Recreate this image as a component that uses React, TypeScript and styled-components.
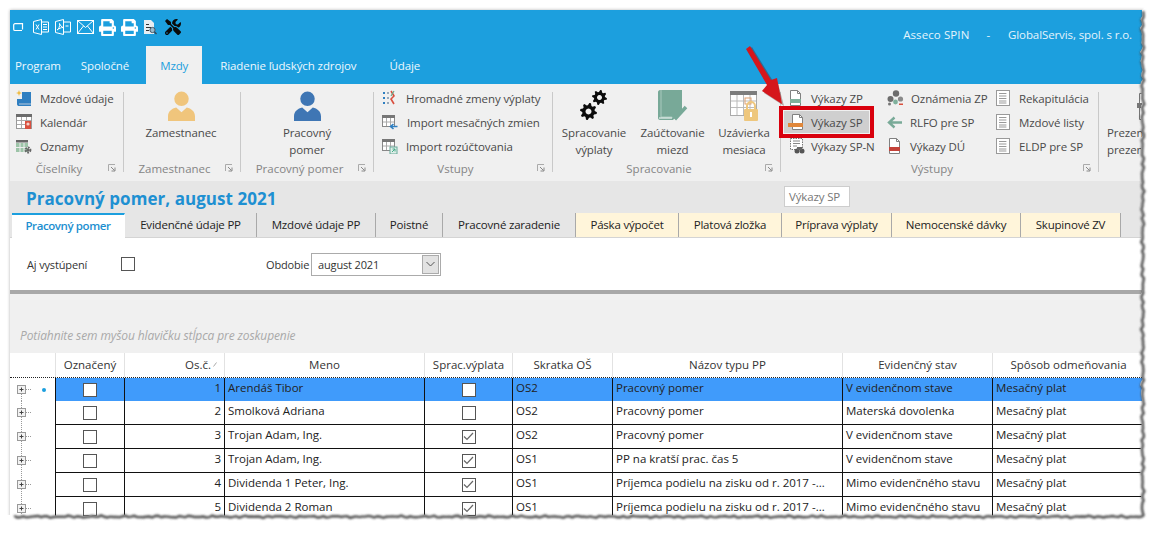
import React from "react";
import styled, { createGlobalStyle } from "styled-components";
import { FaPrint, FaTools } from "react-icons/fa";

const Global = createGlobalStyle`
  html, body { margin: 0; padding: 0; background: #fff; }
  body { font-family: "Open Sans", "Noto Sans", sans-serif; font-size: 11.5px; color: #333; }
  #root { width: 1154px; height: 533px; overflow: hidden; position: relative; }
`;

const Page = styled.div`
  width: 1154px; height: 533px; padding: 10px 0 0 10px; box-sizing: border-box; position: relative; background: #fff; overflow: hidden;
`;
const Win = styled.div`
  width: 1134px; height: 512px; overflow: hidden; display: flex; flex-direction: column; box-shadow: 0 0 3px rgba(0,0,0,.3); background: #fff;
`;
const BlueBar = styled.header`
  background: #1c9fde; height: 74px; flex: none; display: flex; flex-direction: column;
`;
const QuickRow = styled.div`
  height: 36px; display: flex; align-items: center; padding: 0 0 2px 3px; box-sizing: border-box; color: #fff;
`;
const QuickSlot = styled.span<{ $w?: number; $dark?: boolean }>`
  width: ${p => p.$w ?? 22}px; height: 18px; display: flex; align-items: center; color: ${p => (p.$dark ? "#0a0a0a" : "#fff")}; flex: none;
`;
const Brand = styled.div`
  margin-left: auto; padding-right: 12px; padding-top: 14px; display: flex; color: #e4f4fc; font-size: 11.5px; letter-spacing: -0.1px;
`;
const BrandName = styled.span`
  letter-spacing: 0.1px;
`;
const BrandDash = styled.span`
  margin: 0 18px 0 17px;
`;
const TabRow = styled.nav`
  height: 38px; display: flex; align-items: stretch;
`;
const TopTab = styled.div<{ $ml: number; $active?: boolean }>`
  margin-left: ${p => p.$ml}px; display: flex; align-items: center; font-size: 11.5px; letter-spacing: -0.1px; padding: 0 ${p => (p.$active ? 14 : 0)}px 0;
  color: ${p => (p.$active ? "#1c9fde" : "#eef8fd")};
  background: ${p => (p.$active ? "#f0f0f0" : "transparent")};
`;

const Ribbon = styled.section`
  height: 97px; flex: none; background: #f0f0f0; display: flex; align-items: stretch; overflow: hidden;
`;
const Group = styled.div<{ $w: number }>`
  width: ${p => p.$w}px; flex: none; display: flex; flex-direction: column; padding: 2px 0 5px; box-sizing: border-box;
`;
const Sep = styled.div`
  width: 1px; flex: none; background: #c9c9c9; margin: 8px 0 9px;
`;
const GroupBody = styled.div<{ $pl?: number }>`
  flex: 1; display: flex; padding-left: ${p => p.$pl ?? 0}px;
`;
const Foot = styled.div`
  height: 16px; display: flex; align-items: center; color: #858585; font-size: 11.5px;
`;
const FootLabel = styled.span`
  flex: 1; text-align: center;
`;
const Launcher = styled.svg`
  width: 8px; height: 8px; margin-right: 7px; flex: none;
`;
const Col = styled.div<{ $w?: number }>`
  display: flex; flex-direction: column; width: ${p => (p.$w ? p.$w + "px" : "auto")}; flex: none;
`;
const SmallItem = styled.div<{ $gap?: number; $hot?: boolean; $pl?: number }>`
  height: ${p => (p.$hot ? 22 : 24)}px; display: flex; align-items: center; gap: ${p => p.$gap ?? 8}px; white-space: nowrap; color: #4a4a4a; font-size: 11.5px; letter-spacing: -0.1px;
  padding-left: ${p => p.$pl ?? 4}px;
  ${p => (p.$hot ? `margin: 1px 0; width: 81px; background: #cfcfcf; outline: 4px solid #d9000d; outline-offset: 1px;` : ``)}
`;
const BigBtn = styled.div<{ $w: number }>`
  width: ${p => p.$w}px; flex: none; display: flex; flex-direction: column; align-items: center; color: #4a4a4a; font-size: 11.5px; line-height: 17px; text-align: center; letter-spacing: -0.1px;
`;
const ClippedBtn = styled.div`
  width: 60px; flex: none; color: #4a4a4a; font-size: 11.5px; line-height: 17px; letter-spacing: -0.1px; text-indent: 2px;
`;
const BigIcon = styled.div`
  height: 35px; display: flex; align-items: flex-end; margin-bottom: 3px; flex: none;
`;
const ClippedIcon = styled.div`
  height: 35px; margin-bottom: 3px; padding-left: 12px;
`;

const TitleBar = styled.div`
  height: 32px; flex: none; background: #e6e6e6; position: relative; display: flex; align-items: flex-end; padding: 0 0 3px 16px; box-sizing: border-box;
`;
const Title = styled.h1`
  margin: 0; font-size: 17px; line-height: 22px; font-weight: 700; color: #1e90d2; letter-spacing: 0.05px;
`;
const Hint = styled.div`
  position: absolute; left: 774px; top: 5px; width: 66px; height: 21px; box-sizing: border-box; background: #fff; border: 1px solid #cdcdcd; color: #777; font-size: 11.5px; line-height: 19px; padding-left: 4px; letter-spacing: -0.15px;
`;
const Tabs = styled.div`
  height: 24px; flex: none; background: #e6e6e6; display: flex; padding-left: 2px; border-bottom: 1px solid #d4d4d4; box-sizing: content-box;
`;
const PageTab = styled.div<{ $w: number; $kind?: "active" | "warm" }>`
  width: ${p => p.$w}px; flex: none; box-sizing: border-box; display: flex; align-items: center; justify-content: center; padding-bottom: 2px; font-size: 11.5px; color: #222; letter-spacing: -0.2px; white-space: nowrap;
  border-right: 1px solid ${p => (p.$kind === "active" ? "transparent" : "#a9a9a9")};
  background: ${p => (p.$kind === "active" ? "#fff" : p.$kind === "warm" ? "#fff5da" : "#e6e6e6")};
  ${p => (p.$kind === "active" ? `border-top: 2px solid #1c9fde; color: #1c8fd0; font-weight: 600; margin-bottom: -1px; letter-spacing: -0.4px;` : ``)}
`;
const Filter = styled.div`
  height: 52px; flex: none; background: #fff; display: flex; align-items: center; padding-left: 17px; font-size: 11px; color: #333; letter-spacing: -0.15px;
`;
const FilterLabel = styled.span<{ $w: number; $ml?: number }>`
  width: ${p => p.$w}px; margin-left: ${p => p.$ml ?? 0}px; flex: none;
`;
const Box = styled.span`
  width: 12px; height: 12px; flex: none; display: flex; align-items: center; justify-content: center; background: #fff; border: 1px solid #555; box-sizing: content-box;
`;
const Select = styled.div`
  width: 130px; height: 23px; box-sizing: border-box; border: 1px solid #ababab; display: flex; align-items: center; justify-content: space-between; padding: 0 1px 0 6px; background: #fff; font-size: 11px;
`;
const SelBtn = styled.span`
  width: 17px; height: 19px; background: #e2e2e2; border: 1px solid #ababab; box-sizing: border-box; display: flex; align-items: center; justify-content: center;
`;
const Divider = styled.div`
  height: 4px; flex: none; background: #a8a8a8;
`;
const GroupPanel = styled.div`
  height: 59px; flex: none; background: #f0f0f0; display: flex; align-items: flex-end; padding: 0 0 9px 10px; box-sizing: border-box; color: #a9a9a9; font-style: italic; font-size: 12px; letter-spacing: -0.1px;
`;
const COLS = "45px 69px 100px 200px 88px 100px 230px 150px 152px";
const HeadRow = styled.div`
  display: grid; grid-template-columns: ${COLS}; height: 25px; flex: none; background: #fff; border-bottom: 1px dotted #222; box-sizing: border-box;
`;
const HeadCell = styled.div<{ $right?: boolean }>`
  border-left: 1px solid #e2e2e2; display: flex; align-items: center; justify-content: ${p => (p.$right ? "flex-end" : "center")}; padding: 0 ${p => (p.$right ? 6 : 0)}px 2px 0; font-size: 11.5px; color: #333; white-space: nowrap; gap: 2px; box-sizing: border-box;
`;
const HeadBlank = styled.div``;
const Row = styled.div<{ $first?: boolean }>`
  display: grid; grid-template-columns: ${COLS}; height: ${p => (p.$first ? 23 : 24)}px; flex: none;
`;
const Tree = styled.div`
  display: flex; align-items: center; padding-left: 4px; background: #fff;
`;
const Dot = styled.span`
  width: 4px; height: 4px; border-radius: 50%; background: #1c9fde; margin-left: 11px; flex: none;
`;
const Cell = styled.div<{ $sel?: boolean; $right?: boolean; $center?: boolean }>`
  border-left: 1px solid #111; border-bottom: 1px solid #111; box-sizing: border-box; display: flex; align-items: center;
  justify-content: ${p => (p.$right ? "flex-end" : p.$center ? "center" : "flex-start")};
  padding: 0 ${p => (p.$right ? 3 : 0)}px ${p => (p.$center ? 0 : 4)}px ${p => (p.$right || p.$center ? 0 : 3)}px;
  background: ${p => (p.$sel ? "#409bfb" : "#fff")}; color: #222; font-size: 11.5px; white-space: nowrap; overflow: hidden;
`;
const Overlay = styled.svg`
  position: absolute; left: 0; top: 0; width: 1154px; height: 533px; pointer-events: none;
`;

/* ---------- icons ---------- */
const Excel = () => (
  <svg width="16" height="16" viewBox="0 0 16 16" fill="none" stroke="#fff" strokeWidth="1">
    <path d="M.5 2.500l8-2v15l-8-2zM8.500 3h7v10h-7M10 5.500h4M10 8h4M10 10.500h4" />
    <path d="M3 5.500l3 5M6 5.500l-3 5" />
  </svg>
);
const Pdf = () => (
  <svg width="16" height="16" viewBox="0 0 16 16" fill="none" stroke="#fff" strokeWidth="1">
    <path d="M.5 2.500l8-2v15l-8-2zM8.500 3h7v10h-7M10.500 7h3" />
    <path d="M2 11c2-1 3-4 2.500-6.500 1 2 2 3.500 3.500 4-2 0-4 1-6 2.500z" />
  </svg>
);
const Mail = () => (
  <svg width="17" height="14" viewBox="0 0 17 14" fill="none" stroke="#fff" strokeWidth="1">
    <rect x=".5" y=".5" width="16" height="13" />
    <path d="M.5.5l8 7 8-7M.5 13.500l6-7.500M16.500 13.500l-6-7.500" />
  </svg>
);
const MiniWin = () => (
  <svg width="11" height="9" viewBox="0 0 11 9" fill="none" stroke="#fff" strokeWidth="1.200">
    <path d="M9 7.500H2A1.300 1.300 0 0 1 .7 6.200V2A1.300 1.300 0 0 1 2 .7h7.500V6.500" />
  </svg>
);
const Preview = () => (
  <svg width="14" height="15" viewBox="0 0 14 15">
    <path d="M1 0h7l3 3v11H1z" fill="#e8eef2" />
    <path d="M3 4h3v1H3zM3 7h5v1H3zM3 10h3v1H3z" fill="#333" />
    <circle cx="9.500" cy="10" r="2.600" fill="#9bc" stroke="#456" />
    <path d="M11.500 12l2 2" stroke="#345" strokeWidth="1.500" />
  </svg>
);
const StarDoc = () => (
  <svg width="16" height="17" viewBox="0 0 16 17">
    <path d="M6 2h9v14H3c-1 0-2-.5-2-2V9h5z" fill="#2f7fc1" />
    <path d="M3 14h12" stroke="#bcd" strokeWidth="1" />
    <path d="M3 0l.8 2.200L6 3l-2.200.8L3 6l-.8-2.200L0 3l2.200-.8z" fill="#f0b93a" />
  </svg>
);
const GridBase = ({ bar = "#777" }: { bar?: string }) => (
  <>
    <rect x=".5" y=".5" width="15" height="14" fill="#fff" stroke="#999" />
    <rect x="0" y="0" width="16" height="3" fill={bar} />
    <path d="M5.500 3v11M10.500 3v11M1 6.500h14M1 10.500h14" stroke="#aaa" />
  </>
);
const CalRed = () => (
  <svg width="16" height="16" viewBox="0 0 16 16">
    <GridBase bar="#6c6c6c" />
    <rect x="9" y="7" width="6" height="8" fill="#d9503f" />
    <circle cx="12" cy="10" r="1.600" fill="#f5d0c8" />
  </svg>
);
const CalGear = () => (
  <svg width="16" height="16" viewBox="0 0 16 16">
    <rect x="0" y="2" width="12" height="2.500" fill="#666" />
    <rect x="0" y="5" width="12" height="9" fill="#9dc4a8" />
    <path d="M4 5v9M8 5v9M0 9.500h12" stroke="#eee" />
    <circle cx="12" cy="12" r="2.400" fill="none" stroke="#666" strokeWidth="2" strokeDasharray="1.600 .9" />
    <circle cx="12" cy="12" r="1.500" fill="#666" />
  </svg>
);
const Person = ({ c }: { c: string }) => (
  <svg width="27" height="30" viewBox="0 0 28 31">
    <circle cx="14" cy="8" r="7.500" fill={c} />
    <path d="M0 31v-5c0-5 4-8 8.500-9l5.500 5 5.500-5c4.500 1 8.500 4 8.500 9v5z" fill={c} />
  </svg>
);
const Launch = () => (
  <Launcher viewBox="0 0 8 8">
    <path d="M.5 7V.5H7" fill="none" stroke="#aaa" />
    <path d="M3 3l3.500 3.500M7 3.500V7H3.500" fill="none" stroke="#888" />
  </Launcher>
);
const Dots = () => (
  <svg width="14" height="16" viewBox="0 0 14 16">
    <path d="M1 2h2v2H1zM1 7h2v2H1zM1 12h2v2H1z" fill="#2f7fc1" />
    <path d="M5 2h2v2H5zM5 7h2v2H5zM5 12h2v2H5z" fill="#9ab" />
    <path d="M9 1l3 5-3 3 3 5" fill="none" stroke="#d9503f" strokeWidth="1.600" />
    <path d="M12 1l-3 5" stroke="#6a8" strokeWidth="1.200" />
  </svg>
);
const TableIn = () => (
  <svg width="16" height="15" viewBox="0 0 16 15">
    <rect x=".5" y=".5" width="12" height="11" fill="#fff" stroke="#888" />
    <rect x="0" y="0" width="13" height="3" fill="#777" />
    <path d="M4.500 3v8M8.500 3v8M1 7h11" stroke="#aaa" />
    <path d="M15.500 11.500H9M11.500 9l-3 2.500 3 2.500" fill="none" stroke="#2f7fc1" strokeWidth="1.600" />
  </svg>
);
const TableOut = () => (
  <svg width="16" height="15" viewBox="0 0 16 15">
    <rect x=".5" y=".5" width="12" height="11" fill="#fff" stroke="#888" />
    <rect x="0" y="0" width="13" height="3" fill="#777" />
    <path d="M4.500 3v8M8.500 3v8M1 7h11" stroke="#aaa" />
    <rect x="8" y="8" width="7" height="7" fill="#dfeee8" stroke="#6a9" />
    <path d="M10 13l3-3M10.500 10H13v2.500" fill="none" stroke="#4a8" />
  </svg>
);
const gear = (cx: number, cy: number, r: number, teeth: number) => {
  const pts: string[] = [];
  const n = teeth * 4;
  for (let i = 0; i < n; i++) {
    const a = ((i + 0.5) / n) * Math.PI * 2;
    const rr = i % 4 < 2 ? r : r * 0.74;
    pts.push(`${(cx + rr * Math.cos(a)).toFixed(2)},${(cy + rr * Math.sin(a)).toFixed(2)}`);
  }
  return `M${pts.join("L")}Z`;
};
const Gears = () => (
  <svg width="28" height="31" viewBox="0 0 28 31">
    <path fillRule="evenodd" d={`${gear(19.5, 7.5, 7.5, 8)} M19.500 5a2.500 2.500 0 1 0 .01 0z`} fill="#0b0b0b" />
    <path fillRule="evenodd" d={`${gear(8.5, 21.5, 8.5, 8)} M8.500 18.500a3 3 0 1 0 .01 0z`} fill="#0b0b0b" />
  </svg>
);
const Book = () => (
  <svg width="30" height="31" viewBox="0 0 30 31">
    <path d="M2 0h22v20l-9 10H2c-1 0-2-1-2-2V2c0-1 1-2 2-2z" fill="#78a998" />
    <path d="M3 0v27h13" fill="none" stroke="#a8c9bd" />
    <path d="M1 28h13" stroke="#fff" />
    <path d="M13 23l5 5 10-11" fill="none" stroke="#78a998" strokeWidth="3.500" />
  </svg>
);
const CalLock = () => (
  <svg width="28" height="30" viewBox="0 0 28 30">
    <rect x=".5" y=".5" width="26" height="24" fill="#fff" stroke="#aaa" />
    <rect x="0" y="0" width="27" height="4" fill="#7d7d7d" />
    <path d="M7 4v20M13.500 4v20M20 4v20M1 10h25M1 16.500h25" stroke="#bbb" />
    <rect x="15" y="7" width="6" height="6" fill="none" stroke="#e0a070" />
    <rect x="14" y="18" width="14" height="12" rx="1" fill="#eec77e" />
    <path d="M17 18v-3a4 4 0 0 1 8 0v3" fill="none" stroke="#eec77e" strokeWidth="2" />
    <rect x="20" y="21" width="2" height="5" fill="#fff" />
  </svg>
);
const Doc = ({ c }: { c: string }) => (
  <svg width="15" height="16" viewBox="0 0 15 16">
    <path d="M2.500.5h7l3 3v12h-10z" fill="#fff" stroke="#808080" />
    <path d="M9.500.5v3h3" fill="none" stroke="#808080" />
    <rect x="2" y="9" width="11" height="4" fill={c} />
  </svg>
);
const DocOrange = () => (
  <svg width="18" height="16" viewBox="0 0 18 16">
    <path d="M4.500.5h7l3 3v12h-10z" fill="#fff" stroke="#808080" />
    <path d="M11.500.5v3h3" fill="none" stroke="#808080" />
    <rect x="0" y="9" width="15" height="4" fill="#e0873a" />
  </svg>
);
const DocBin = () => (
  <svg width="17" height="16" viewBox="0 0 17 16">
    <rect x="2.500" y=".5" width="12" height="11" fill="#fff" stroke="#777" strokeDasharray="1.500 1" />
    <path d="M5 3h7M5 5.500h7M5 8h4" stroke="#888" />
    <circle cx="9" cy="13" r="2.500" fill="#555" />
    <circle cx="14" cy="13" r="2.500" fill="#555" />
    <rect x="9" y="9" width="5" height="3" fill="#666" />
  </svg>
);
const Molecule = () => (
  <svg width="17" height="16" viewBox="0 0 17 16">
    <circle cx="9" cy="3.500" r="3.200" fill="#6d6d6d" />
    <circle cx="3.500" cy="9" r="3" fill="#6d6d6d" />
    <circle cx="13.500" cy="9" r="2.600" fill="#8a8a8a" />
    <circle cx="8.500" cy="12" r="2.400" fill="#7fb09c" />
    <circle cx="2.500" cy="14" r="1.500" fill="#777" />
    <rect x="12" y="13.500" width="4" height="1.500" fill="#d9503f" />
  </svg>
);
const ArrowLeft = () => (
  <svg width="16" height="13" viewBox="0 0 16 13">
    <path d="M15 6.500H3M7.500 1.500L2 6.500l5.500 5" fill="none" stroke="#79aa98" strokeWidth="2.400" />
  </svg>
);
const ListDoc = () => (
  <svg width="15" height="16" viewBox="0 0 15 16">
    <rect x=".5" y=".5" width="13" height="15" fill="#fff" stroke="#999" />
    <path d="M3 3.500h8M3 6h8M3 8.500h8M3 11h8M3 13h8" stroke="#999" strokeDasharray="7 .6" />
  </svg>
);
const Check = () => (
  <svg width="11" height="9" viewBox="0 0 11 9">
    <path d="M1 4.500l3 3 6-6.500" fill="none" stroke="#666" strokeWidth="1.200" />
  </svg>
);
const TreeNode = ({ first }: { first?: boolean }) => (
  <svg width="17" height="24" viewBox="0 0 17 24">
    <path d={first ? "M7.500 16V24" : "M7.500 0V24"} stroke="#999" strokeDasharray="1 1" />
    <path d="M12 11.500h5" stroke="#999" strokeDasharray="1 1" />
    <rect x="3.500" y="7.500" width="8" height="8" fill="#f2f2f2" stroke="#999" />
    <path d="M5.500 11.500h4M7.500 9.500v4" stroke="#444" />
  </svg>
);
const PrezIcon = () => (
  <svg width="30" height="35" viewBox="0 0 30 35">
    <path d="M18.500 7.500h11v26h-11z" fill="#fff" stroke="#777" />
    <rect x="16" y="17" width="5" height="5" fill="#777" />
  </svg>
);

/* ---------- torn edge ---------- */
const wob = (i: number) =>
  Math.sin(i * 1.7) * 0.7 + Math.sin(i * 0.63 + 1) * 0.5 + Math.sin(i * 3.9) * 0.6;
const rightEdge: [number, number][] = [];
for (let y = 0; y <= 168; y++) rightEdge.push([1141.5 + wob(y), 10 + y * 3]);
const bottomEdge: [number, number][] = [];
for (let x = 0; x <= 376; x++) bottomEdge.push([1141 - x * 3, 515.5 + wob(x + 7) * 0.75]);
const jag = [...rightEdge, ...bottomEdge];
const jagLine = jag.map(([x, y]) => `${x.toFixed(1)},${y.toFixed(1)}`).join(" ");
const outside = `M1154,0 L${jag.map(([x, y]) => `${x.toFixed(1)},${y.toFixed(1)}`).join(" L")} L0,516 L0,533 L1154,533 Z`;

/* ---------- data ---------- */
const rows = [
  { n: 1, name: "Arendáš Tibor", sp: false, os: "OS2", typ: "Pracovný pomer", st: "V evidenčnom stave" },
  { n: 2, name: "Smolková Adriana", sp: false, os: "OS2", typ: "Pracovný pomer", st: "Materská dovolenka" },
  { n: 3, name: "Trojan Adam, Ing.", sp: true, os: "OS2", typ: "Pracovný pomer", st: "V evidenčnom stave" },
  { n: 3, name: "Trojan Adam, Ing.", sp: true, os: "OS1", typ: "PP na kratší prac. čas 5", st: "V evidenčnom stave" },
  { n: 4, name: "Dividenda 1 Peter, Ing.", sp: true, os: "OS1", typ: "Príjemca podielu na zisku od r. 2017 -...", st: "Mimo evidenčného stavu" },
  { n: 5, name: "Dividenda 2 Roman", sp: true, os: "OS1", typ: "Príjemca podielu na zisku od r. 2017 -...", st: "Mimo evidenčného stavu" },
];
const tabs: { t: string; w: number; kind?: "active" | "warm" }[] = [
  { t: "Pracovný pomer", w: 113, kind: "active" },
  { t: "Evidenčné údaje PP", w: 132 },
  { t: "Mzdové údaje PP", w: 119 },
  { t: "Poistné", w: 67 },
  { t: "Pracovné zaradenie", w: 133 },
  { t: "Páska výpočet", w: 103, kind: "warm" },
  { t: "Platová zložka", w: 103, kind: "warm" },
  { t: "Príprava výplaty", w: 110, kind: "warm" },
  { t: "Nemocenské dávky", w: 129, kind: "warm" },
  { t: "Skupinové ZV", w: 100, kind: "warm" },
];

export default function App() {
  return (
    <Page>
      <Global />
      <Win>
        <BlueBar>
          <QuickRow>
            <QuickSlot $w={20}><MiniWin /></QuickSlot>
            <QuickSlot><Excel /></QuickSlot>
            <QuickSlot><Pdf /></QuickSlot>
            <QuickSlot><Mail /></QuickSlot>
            <QuickSlot><FaPrint size={17} /></QuickSlot>
            <QuickSlot><FaPrint size={17} /></QuickSlot>
            <QuickSlot><Preview /></QuickSlot>
            <QuickSlot $dark><FaTools size={16} /></QuickSlot>
            <Brand><BrandName>Asseco SPIN</BrandName><BrandDash>-</BrandDash>GlobalServis, spol. s r.o.</Brand>
          </QuickRow>
          <TabRow>
            <TopTab $ml={5}>Program</TopTab>
            <TopTab $ml={20}>Spoločné</TopTab>
            <TopTab $ml={17} $active>Mzdy</TopTab>
            <TopTab $ml={18}>Riadenie ľudských zdrojov</TopTab>
            <TopTab $ml={33}>Údaje</TopTab>
          </TabRow>
        </BlueBar>
        <Ribbon>
          <Group $w={113}>
            <GroupBody $pl={2}>
              <Col>
                <SmallItem><StarDoc /><span>Mzdové údaje</span></SmallItem>
                <SmallItem><CalRed /><span>Kalendár</span></SmallItem>
                <SmallItem><CalGear /><span>Oznamy</span></SmallItem>
              </Col>
            </GroupBody>
            <Foot><FootLabel>Číselníky</FootLabel><Launch /></Foot>
          </Group>
          <Sep />
          <Group $w={116}>
            <GroupBody $pl={7}>
              <BigBtn $w={100}><BigIcon><Person c="#f0c57c" /></BigIcon>Zamestnanec</BigBtn>
            </GroupBody>
            <Foot><FootLabel>Zamestnanec</FootLabel><Launch /></Foot>
          </Group>
          <Sep />
          <Group $w={132}>
            <GroupBody $pl={16}>
              <BigBtn $w={100}><BigIcon><Person c="#3f76b4" /></BigIcon>Pracovný<br />pomer</BigBtn>
            </GroupBody>
            <Foot><FootLabel>Pracovný pomer</FootLabel><Launch /></Foot>
          </Group>
          <Sep />
          <Group $w={178}>
            <GroupBody $pl={4}>
              <Col>
                <SmallItem $gap={10}><Dots /><span>Hromadné zmeny výplaty</span></SmallItem>
                <SmallItem $gap={9}><TableIn /><span>Import mesačných zmien</span></SmallItem>
                <SmallItem $gap={8}><TableOut /><span>Import rozúčtovania</span></SmallItem>
              </Col>
            </GroupBody>
            <Foot><FootLabel>Vstupy</FootLabel><Launch /></Foot>
          </Group>
          <Sep />
          <Group $w={227}>
            <GroupBody $pl={4}>
              <BigBtn $w={74}><BigIcon><Gears /></BigIcon>Spracovanie<br />výplaty</BigBtn>
              <BigBtn $w={83}><BigIcon><Book /></BigIcon>Zaúčtovanie<br />miezd</BigBtn>
              <BigBtn $w={60}><BigIcon><CalLock /></BigIcon>Uzávierka<br />mesiaca</BigBtn>
            </GroupBody>
            <Foot><FootLabel>Spracovanie</FootLabel><Launch /></Foot>
          </Group>
          <Sep />
          <Group $w={317}>
            <GroupBody $pl={3}>
              <Col $w={103}>
                <SmallItem><Doc c="#7fb09c" /><span>Výkazy ZP</span></SmallItem>
                <SmallItem $hot $gap={5}><DocOrange /><span>Výkazy SP</span></SmallItem>
                <SmallItem $gap={6}><DocBin /><span>Výkazy SP-N</span></SmallItem>
              </Col>
              <Col $w={109}>
                <SmallItem $pl={0} $gap={7}><Molecule /><span>Oznámenia ZP</span></SmallItem>
                <SmallItem $pl={0} $gap={7}><ArrowLeft /><span>RLFO pre SP</span></SmallItem>
                <SmallItem $pl={0} $gap={8}><Doc c="#c4433a" /><span>Výkazy DÚ</span></SmallItem>
              </Col>
              <Col>
                <SmallItem $pl={0}><ListDoc /><span>Rekapitulácia</span></SmallItem>
                <SmallItem $pl={0}><ListDoc /><span>Mzdové listy</span></SmallItem>
                <SmallItem $pl={0}><ListDoc /><span>ELDP pre SP</span></SmallItem>
              </Col>
            </GroupBody>
            <Foot><FootLabel>Výstupy</FootLabel><Launch /></Foot>
          </Group>
          <Sep />
          <Group $w={60}>
            <GroupBody $pl={8}>
              <ClippedBtn>
                <ClippedIcon><PrezIcon /></ClippedIcon>
                Prezentácia<br />prezentácie
              </ClippedBtn>
            </GroupBody>
          </Group>
        </Ribbon>
        <TitleBar>
          <Title>Pracovný pomer, august 2021</Title>
          <Hint>Výkazy SP</Hint>
        </TitleBar>
        <Tabs>
          {tabs.map(t => <PageTab key={t.t} $w={t.w} $kind={t.kind}>{t.t}</PageTab>)}
        </Tabs>
        <Filter>
          <FilterLabel $w={94}>Aj vystúpení</FilterLabel>
          <Box />
          <FilterLabel $w={45} $ml={131}>Obdobie</FilterLabel>
          <Select>august 2021<SelBtn>
            <svg width="9" height="6" viewBox="0 0 9 6"><path d="M.5 1l4 4 4-4" fill="none" stroke="#555" /></svg>
          </SelBtn></Select>
        </Filter>
        <Divider />
        <GroupPanel>Potiahnite sem myšou hlavičku stĺpca pre zoskupenie</GroupPanel>
        <HeadRow>
          <HeadBlank />
          <HeadCell>Označený</HeadCell>
          <HeadCell $right>Os.č.<svg width="5" height="5" viewBox="0 0 5 5"><path d="M.5 4.500l3-4" stroke="#aaa" fill="none" /></svg></HeadCell>
          <HeadCell>Meno</HeadCell>
          <HeadCell>Sprac.výplata</HeadCell>
          <HeadCell>Skratka OŠ</HeadCell>
          <HeadCell>Názov typu PP</HeadCell>
          <HeadCell>Evidenčný stav</HeadCell>
          <HeadCell>Spôsob odmeňovania</HeadCell>
        </HeadRow>
        {rows.map((r, i) => {
          const sel = i === 0;
          return (
            <Row key={i} $first={sel}>
              <Tree><TreeNode first={sel} />{sel && <Dot />}</Tree>
              <Cell $center $sel={sel}><Box /></Cell>
              <Cell $right $sel={sel}>{r.n}</Cell>
              <Cell $sel={sel}>{r.name}</Cell>
              <Cell $center $sel={sel}><Box>{r.sp && <Check />}</Box></Cell>
              <Cell $sel={sel}>{r.os}</Cell>
              <Cell $sel={sel}>{r.typ}</Cell>
              <Cell $sel={sel}>{r.st}</Cell>
              <Cell $sel={sel}>Mesačný plat</Cell>
            </Row>
          );
        })}
      </Win>
      <Overlay viewBox="0 0 1154 533">
        <defs>
          <filter id="tornBlur" x="-5%" y="-5%" width="110%" height="110%"><feGaussianBlur stdDeviation="1.100" /></filter>
        </defs>
        <path d={outside} fill="#fff" />
        <polyline points={jagLine} fill="none" stroke="#4a4a4a" strokeWidth="2.400" filter="url(#tornBlur)" transform="translate(1.200 1.200)" />
        <polygon points="747,49 751,46 772,80 777,82 783,105 763,92 767,85" fill="#4a1010" opacity=".35" transform="translate(1 1)" />
        <polygon points="746,49 750,46 771,80 777,78 782,104 762,91 767,85" fill="#d5161c" />
      </Overlay>
    </Page>
  );
}
